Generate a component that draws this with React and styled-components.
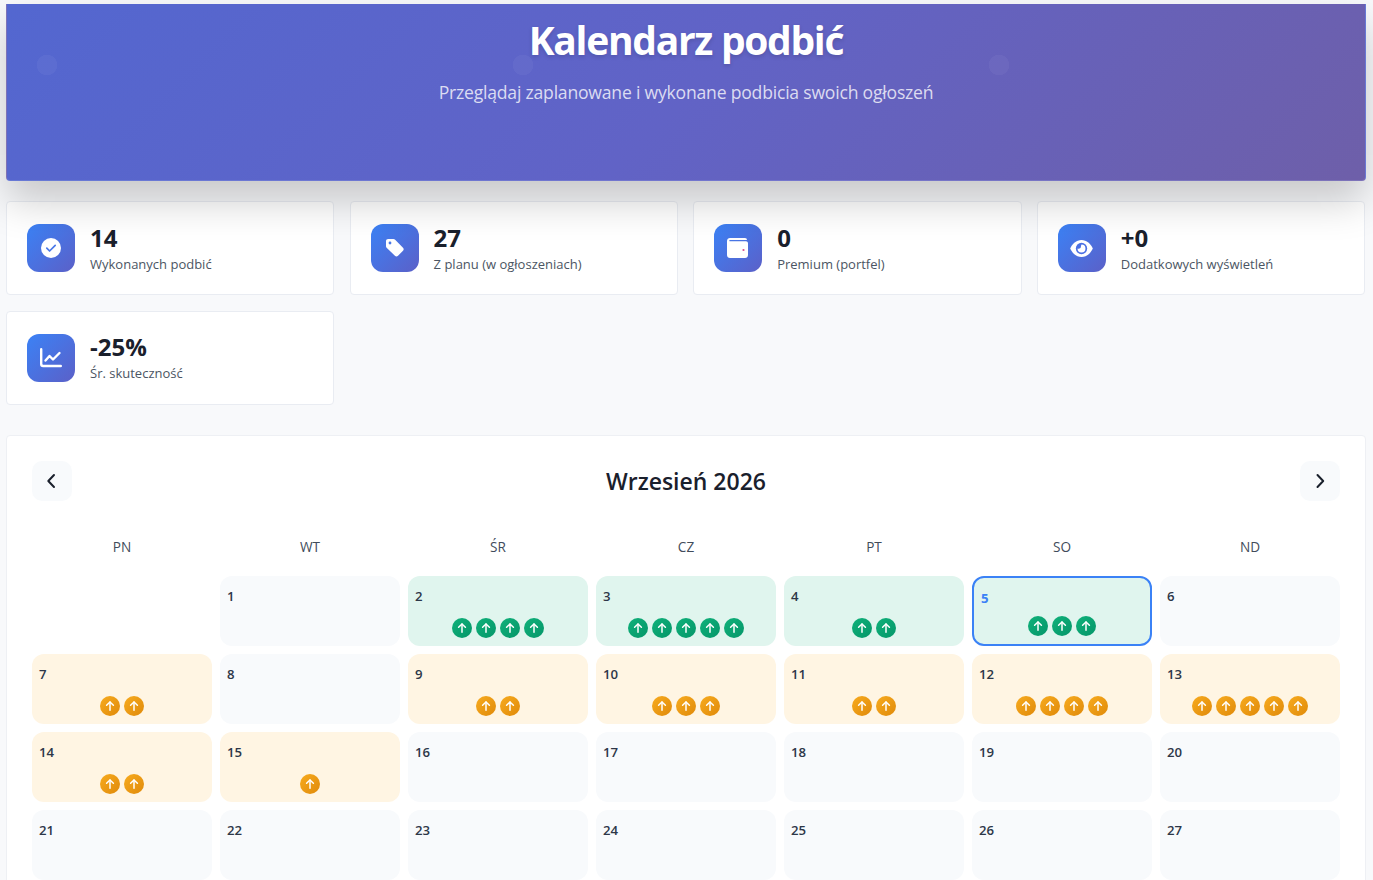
import React from "react";
import styled, { createGlobalStyle } from "styled-components";

const Global = createGlobalStyle`
  html, body { margin: 0; height: 880px; overflow: hidden; background: #f8f9fb; }
  body { font-family: "Open Sans", "Noto Sans", "Liberation Sans", sans-serif; color: #1a202c; }
  * { box-sizing: border-box; }
`;

const Page = styled.div`
  padding: 4px 7px 0 6px;
  display: flex;
  flex-direction: column;
`;

const Hero = styled.header`
  position: relative;
  z-index: 1;
  height: 177px;
  margin-bottom: 20.4px;
  padding-top: 9px;
  border: 1px solid rgba(255, 255, 255, 0.12);
  border-top: 0;
  border-radius: 0 0 4px 4px;
  background: linear-gradient(135deg, #5367d0 0%, #6163c6 50%, #6e5fa9 100%);
  box-shadow: 0 20px 40px rgba(0, 0, 0, 0.2);
  color: #fff;
  text-align: center;
  overflow: hidden;
  &::before {
    content: "";
    position: absolute;
    inset: 0;
    background-image: radial-gradient(circle at 40px 61px, rgba(255, 255, 255, 0.04) 10px, transparent 10.5px);
    background-size: 476px 177px;
  }
`;

const HeroTitle = styled.h1`
  position: relative;
  margin: 0 0 13px;
  font-size: 39px;
  line-height: 54px;
  font-weight: 700;
  letter-spacing: -1.3px;
  text-shadow: 0 2px 4px rgba(0, 0, 0, 0.15);
`;

const HeroSub = styled.p`
  position: relative;
  margin: 0;
  font-size: 17.6px;
  line-height: 24px;
  letter-spacing: -0.215px;
  color: rgba(255, 255, 255, 0.78);
`;

const Stats = styled.section`
  display: grid;
  grid-template-columns: repeat(4, 328.4px);
  gap: 15.4px 15.2px;
  margin-bottom: 30px;
`;

const StatCard = styled.div`
  display: flex;
  align-items: center;
  gap: 15px;
  height: 94px;
  padding: 0 20px;
  background: #fff;
  border: 1px solid #e9ecf2;
  border-radius: 4px;
`;

const StatIcon = styled.div`
  width: 48px;
  height: 48px;
  flex: none;
  display: flex;
  align-items: center;
  justify-content: center;
  border-radius: 12px;
  background: linear-gradient(135deg, #3b82f6, #5b60c8);
`;

const StatText = styled.div`
  display: flex;
  flex-direction: column;
`;

const StatValue = styled.div`
  font-size: 24px;
  line-height: 30px;
  font-weight: 700;
  color: #1a202c;
`;

const StatLabel = styled.div`
  margin-top: 1px;
  font-size: 13px;
  line-height: 20px;
  color: #4b5563;
`;

const Calendar = styled.section`
  padding: 25px;
  background: #fff;
  border: 1px solid #eef0f4;
  border-radius: 4px;
`;

const CalHead = styled.div`
  display: flex;
  align-items: center;
  justify-content: space-between;
  margin-bottom: 36px;
`;

const NavBtn = styled.button`
  width: 40px;
  height: 40px;
  padding: 0;
  display: flex;
  align-items: center;
  justify-content: center;
  border: 0;
  border-radius: 10px;
  background: #f8fafc;
  color: #1a202c;
`;

const Month = styled.h2`
  margin: 0;
  font-size: 23px;
  line-height: 32px;
  font-weight: 600;
  color: #1a202c;
`;

const Grid = styled.div`
  display: grid;
  grid-template-columns: repeat(7, 180px);
  grid-auto-rows: 70px;
  gap: 8px;
`;

const Weekdays = styled.div`
  display: grid;
  grid-template-columns: repeat(7, 180px);
  gap: 8px;
  margin-bottom: 19px;
`;

const Weekday = styled.div`
  text-align: center;
  font-size: 13.6px;
  line-height: 20px;
  font-weight: 500;
  color: #414b5a;
`;

const cellBg = { none: "#f8fafc", done: "#e0f5ee", plan: "#fff5e3" };

const Cell = styled.div`
  display: flex;
  flex-direction: column;
  justify-content: space-between;
  padding: 8px 7px;
  border-radius: 12px;
  border: ${(p) => (p.$today ? "2px solid #3b82f6" : "0")};
  background: ${(p) => cellBg[p.$kind]};
`;

const Empty = styled.div``;

const DayNum = styled.span`
  font-size: 13.2px;
  line-height: 24px;
  height: 24px;
  font-weight: ${(p) => (p.$today ? 700 : 600)};
  color: ${(p) => (p.$today ? "#3b82f6" : "#2d3748")};
`;

const Badges = styled.div`
  display: flex;
  justify-content: center;
  gap: 4px;
`;

const Badge = styled.span`
  width: 20px;
  height: 20px;
  display: flex;
  align-items: center;
  justify-content: center;
  border-radius: 50%;
  color: #fff;
  background: ${(p) =>
    p.$kind === "done"
      ? "linear-gradient(135deg, #10b17a, #059669)"
      : "linear-gradient(135deg, #f7ab1f, #e08a0a)"};
`;

const Arrow = () => (
  <svg width="12" height="12" viewBox="0 0 12 12" fill="none" stroke="currentColor" strokeWidth="1.5" strokeLinecap="round" strokeLinejoin="round">
    <path d="M6 10.2V2" />
    <path d="M2.6 5.3 6 2l3.4 3.3" />
  </svg>
);

const CheckIcon = () => (
  <svg width="20" height="20" viewBox="0 0 20 20">
    <circle cx="10" cy="10" r="10" fill="#fff" />
    <path d="M5.8 10.2 8.6 13l5.6-5.6" fill="none" stroke="#4a78e8" strokeWidth="1.7" strokeLinecap="round" strokeLinejoin="round" />
  </svg>
);

const TagIcon = () => (
  <svg width="20" height="20" viewBox="0 0 20 20">
    <path d="M1 3.2C1 1.9 1.9 1 3.2 1h5.2c.6 0 1.1.2 1.5.6l8.1 8.1c.9.9.9 2.2 0 3.1l-5 5c-.9.9-2.2.9-3.1 0L1.6 9.7C1.2 9.3 1 8.8 1 8.2z" fill="#fff" />
    <circle cx="5" cy="5" r="1.4" fill="#4a78e8" />
  </svg>
);

const WalletIcon = () => (
  <svg width="22" height="20" viewBox="0 0 22 20">
    <path d="M3 0h15a2 2 0 0 1 2 2H2.500A1.500 1.500 0 0 0 2.500 3.200H19c1.100 0 2 .9 2 2V17c0 1.700-1.300 3-3 3H3c-1.700 0-3-1.300-3-3V3c0-1.700 1.300-3 3-3z" fill="#fff" />
    <circle cx="16.5" cy="12" r="1.1" fill="#d94a8c" />
  </svg>
);

const EyeIcon = () => (
  <svg width="23" height="17" viewBox="0 0 24 18">
    <path d="M12 0c5.500 0 9.800 4.200 12 9-2.200 4.800-6.500 9-12 9S2.200 13.800 0 9C2.200 4.200 6.500 0 12 0z" fill="#fff" />
    <circle cx="12" cy="9" r="6" fill="#4a70e4" />
    <path d="M12 4.800a4.200 4.200 0 1 1-4.200 4.200c1.500.8 3.400-.2 3.500-1.500.1-1 .2-2 .7-2.700z" fill="#fff" />
  </svg>
);

const ChartIcon = () => (
  <svg width="22" height="20" viewBox="0 0 22 20" fill="none" stroke="#fff" strokeWidth="2.4" strokeLinecap="round" strokeLinejoin="round">
    <path d="M1.200 1.200V16a2 2 0 0 0 2 2h17.600" />
    <path d="M5.500 12.500 9.500 8l3.500 3.500L19.500 5" />
  </svg>
);

const stats = [
  { icon: <CheckIcon />, value: "14", label: "Wykonanych podbić" },
  { icon: <TagIcon />, value: "27", label: "Z planu (w ogłoszeniach)" },
  { icon: <WalletIcon />, value: "0", label: "Premium (portfel)" },
  { icon: <EyeIcon />, value: "+0", label: "Dodatkowych wyświetleń" },
  { icon: <ChartIcon />, value: "-25%", label: "Śr. skuteczność" },
];

const weekdays = ["PN", "WT", "ŚR", "CZ", "PT", "SO", "ND"];
const done = { 2: 4, 3: 5, 4: 2, 5: 3 };
const plan = { 7: 2, 9: 2, 10: 3, 11: 2, 12: 4, 13: 5, 14: 2, 15: 1 };
const days = Array.from({ length: 30 }, (_, i) => i + 1);

export default function App() {
  return (
    <Page>
      <Global />
      <Hero>
        <HeroTitle>Kalendarz podbić</HeroTitle>
        <HeroSub>Przeglądaj zaplanowane i wykonane podbicia swoich ogłoszeń</HeroSub>
      </Hero>
      <Stats>
        {stats.map((s) => (
          <StatCard key={s.label}>
            <StatIcon>{s.icon}</StatIcon>
            <StatText>
              <StatValue>{s.value}</StatValue>
              <StatLabel>{s.label}</StatLabel>
            </StatText>
          </StatCard>
        ))}
      </Stats>
      <Calendar>
        <CalHead>
          <NavBtn aria-label="Poprzedni">
            <svg width="20" height="20" viewBox="0 0 20 20" fill="none" stroke="currentColor" strokeWidth="2" strokeLinecap="round" strokeLinejoin="round"><path d="M12 4 6.300 10l5.700 6" /></svg>
          </NavBtn>
          <Month>Wrzesień 2026</Month>
          <NavBtn aria-label="Następny">
            <svg width="20" height="20" viewBox="0 0 20 20" fill="none" stroke="currentColor" strokeWidth="2" strokeLinecap="round" strokeLinejoin="round"><path d="M7.500 4l5.700 6-5.700 6" /></svg>
          </NavBtn>
        </CalHead>
        <Weekdays>
          {weekdays.map((d) => <Weekday key={d}>{d}</Weekday>)}
        </Weekdays>
        <Grid>
          <Empty />
          {days.map((d) => {
            const kind = done[d] ? "done" : plan[d] ? "plan" : "none";
            const count = done[d] || plan[d] || 0;
            const today = d === 5;
            return (
              <Cell key={d} $kind={kind} $today={today}>
                <DayNum $today={today}>{d}</DayNum>
                {count > 0 && (
                  <Badges>
                    {Array.from({ length: count }, (_, i) => (
                      <Badge key={i} $kind={kind}><Arrow /></Badge>
                    ))}
                  </Badges>
                )}
              </Cell>
            );
          })}
        </Grid>
      </Calendar>
    </Page>
  );
}
